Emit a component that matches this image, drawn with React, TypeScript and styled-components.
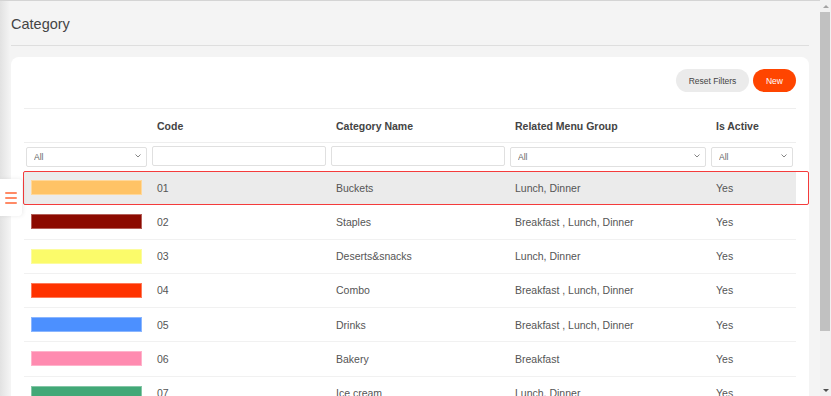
import React from "react";
import styled, { createGlobalStyle } from "styled-components";

const Global = createGlobalStyle`
  html, body { overflow: hidden; }
  body {
    margin: 0;
    background: #f4f4f4;
    font-family: "Liberation Sans", Arial, sans-serif;
    color: #555;
  }
`;

const Page = styled.div`
  min-height: 100vh;
  box-sizing: border-box;
  margin-right: 11px;
  border-top: 1px solid #d4d4d4;
  background: linear-gradient(to right, #e2e2e2 0, #f4f4f4 10px);
  padding: 0 11px 14px 11px;
`;

const Title = styled.h1`
  margin: 0;
  padding: 13px 0 10px;
  font-size: 14.5px;
  line-height: 21px;
  font-weight: 400;
  color: #444;
  border-bottom: 1px solid #dedede;
`;

const Card = styled.section`
  position: relative;
  margin-top: 11px;
  background: #fff;
  border-radius: 8px;
  padding: 12px 13px 12px 13px;
`;

const Toolbar = styled.div`
  display: flex;
  justify-content: flex-end;
  gap: 4px;
  padding-bottom: 16px;
`;

const Pill = styled.button<{ $primary?: boolean }>`
  height: 23px;
  border: none;
  border-radius: 12px;
  padding: 0;
  width: ${(p) => (p.$primary ? "43px" : "73px")};
  font-family: "Liberation Sans", Arial, sans-serif;
  font-size: 8.5px;
  font-weight: 500;
  background: ${(p) => (p.$primary ? "#ff4500" : "#ebebeb")};
  color: ${(p) => (p.$primary ? "#fff" : "#444")};
`;

const cols = "126px 179px 179px 201px 1fr";

const HeadRow = styled.div`
  display: grid;
  grid-template-columns: ${cols};
  height: 35px;
  border-top: 1px solid #eeeeee;
  border-bottom: 1px solid #eeeeee;
  box-sizing: border-box;
  align-items: center;
`;

const HeadCell = styled.div`
  padding-left: 7px;
  font-size: 10.5px;
  font-weight: 700;
  color: #444;
`;

const FilterRow = styled.div`
  display: grid;
  grid-template-columns: ${cols};
  height: 28px;
  padding-top: 3px;
  box-sizing: border-box;
`;

const FilterCell = styled.div`
  position: relative;
  padding: 0 3px 0 2px;
`;

const Select = styled.select`
  appearance: none;
  -webkit-appearance: none;
  width: 100%;
  height: 20px;
  box-sizing: border-box;
  border: 1px solid #e0e0e0;
  border-radius: 2px;
  background: #fff;
  font-family: "Liberation Sans", Arial, sans-serif;
  font-size: 8.5px;
  color: #666;
  padding: 0 0 0 7px;
`;

const Chevron = styled.svg`
  position: absolute;
  right: 9px;
  top: 8px;
  width: 6px;
  height: 4px;
  pointer-events: none;
`;

const TextInput = styled.input`
  width: 100%;
  height: 20px;
  box-sizing: border-box;
  border: 1px solid #e0e0e0;
  border-radius: 2px;
  background: #fff;
`;

const Row = styled.div<{ $active?: boolean }>`
  position: relative;
  display: grid;
  grid-template-columns: ${cols};
  height: 34.25px;
  box-sizing: border-box;
  align-items: center;
  border-bottom: 1px solid #f1f1f1;
  background: ${(p) => (p.$active ? "#ebebeb" : "#fff")};
  ${(p) =>
    p.$active &&
    `
    &::after {
      content: "";
      position: absolute;
      left: -1px;
      right: -13px;
      top: 0;
      bottom: -1px;
      border: 1.5px solid #f43b3b;
      border-radius: 2px;
      pointer-events: none;
    }
  `}
`;

const Cell = styled.div`
  padding-left: 7px;
  font-size: 10.5px;
  color: #555;
  white-space: nowrap;
`;

const Swatch = styled.div<{ $color: string }>`
  width: 111px;
  height: 15px;
  background: ${(p) => p.$color};
  box-shadow: inset 0 0 0 1px rgba(255, 255, 255, 0.35);
`;

const MenuTab = styled.button`
  position: fixed;
  left: 0;
  top: 179px;
  width: 22px;
  height: 37px;
  border: none;
  padding: 0;
  background: #fff;
  border-radius: 0 4px 4px 0;
  box-shadow: 1px 0 4px rgba(0, 0, 0, 0.08);
  display: flex;
  flex-direction: column;
  align-items: center;
  justify-content: center;
  gap: 3px;
`;

const MenuLine = styled.span`
  display: block;
  width: 12px;
  height: 2px;
  background: #ff8a66;
  border-radius: 1px;
`;

const ScrollTrack = styled.div`
  position: fixed;
  top: 0;
  right: 0;
  bottom: 0;
  width: 11px;
  background: #f1f1f1;
  display: flex;
  flex-direction: column;
  align-items: center;
`;

const ScrollArrow = styled.div<{ $down?: boolean }>`
  height: 12px;
  width: 100%;
  display: flex;
  align-items: center;
  justify-content: center;
  &::before {
    content: "";
    width: 0;
    height: 0;
    border-left: 3px solid transparent;
    border-right: 3px solid transparent;
    ${(p) =>
      p.$down ? "border-top: 3px solid #505050;" : "border-bottom: 3px solid #a3a3a3;"}
  }
`;

const ScrollThumb = styled.div`
  width: 10px;
  height: 319px;
  align-self: flex-start;
  background: #c1c1c1;
`;

const Spacer = styled.div`
  flex: 1;
`;

const rows = [
  { color: "#ffc366", code: "01", name: "Buckets", group: "Lunch, Dinner", active: "Yes" },
  { color: "#8c0a00", code: "02", name: "Staples", group: "Breakfast , Lunch, Dinner", active: "Yes" },
  { color: "#fbfb6a", code: "03", name: "Deserts&snacks", group: "Lunch, Dinner", active: "Yes" },
  { color: "#ff3300", code: "04", name: "Combo", group: "Breakfast , Lunch, Dinner", active: "Yes" },
  { color: "#4c90ff", code: "05", name: "Drinks", group: "Breakfast , Lunch, Dinner", active: "Yes" },
  { color: "#ff8bb0", code: "06", name: "Bakery", group: "Breakfast", active: "Yes" },
  { color: "#42a877", code: "07", name: "Ice cream", group: "Lunch, Dinner", active: "Yes" },
  { color: "#9b59b6", code: "08", name: "Sides", group: "Lunch, Dinner", active: "Yes" },
];

function FilterSelect() {
  return (
    <FilterCell>
      <Select defaultValue="All">
        <option>All</option>
      </Select>
      <Chevron viewBox="0 0 6 4">
        <path d="M0.5 0.5 L3 3 L5.5 0.5" fill="none" stroke="#777" strokeWidth="0.9" />
      </Chevron>
    </FilterCell>
  );
}

export default function App() {
  return (
    <>
      <Global />
      <Page>
        <Title>Category</Title>
        <Card>
          <Toolbar>
            <Pill>Reset Filters</Pill>
            <Pill $primary>New</Pill>
          </Toolbar>
          <HeadRow>
            <HeadCell />
            <HeadCell>Code</HeadCell>
            <HeadCell>Category Name</HeadCell>
            <HeadCell>Related Menu Group</HeadCell>
            <HeadCell>Is Active</HeadCell>
          </HeadRow>
          <FilterRow>
            <FilterSelect />
            <FilterCell>
              <TextInput />
            </FilterCell>
            <FilterCell>
              <TextInput />
            </FilterCell>
            <FilterSelect />
            <FilterSelect />
          </FilterRow>
          {rows.map((r, i) => (
            <Row key={r.code} $active={i === 0}>
              <Cell>
                <Swatch $color={r.color} />
              </Cell>
              <Cell>{r.code}</Cell>
              <Cell>{r.name}</Cell>
              <Cell>{r.group}</Cell>
              <Cell>{r.active}</Cell>
            </Row>
          ))}
        </Card>
      </Page>
      <MenuTab aria-label="menu">
        <MenuLine />
        <MenuLine />
        <MenuLine />
      </MenuTab>
      <ScrollTrack aria-hidden>
        <ScrollArrow />
        <ScrollThumb />
        <Spacer />
        <ScrollArrow $down />
      </ScrollTrack>
    </>
  );
}
